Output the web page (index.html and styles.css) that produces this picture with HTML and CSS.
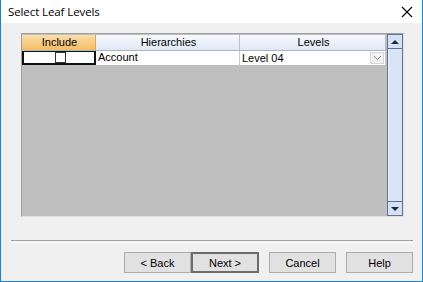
FILE: index.html
```html
<!DOCTYPE html>
<html lang="en">

<head>
    <meta charset="UTF-8">
    <title>Select Leaf Levels</title>
    <link rel="stylesheet" href="styles.css">
</head>

<body>
    <div class="window">
        <div class="titlebar">
            <p>Select Leaf Levels</p>
            <svg class="close" width="12" height="12" viewBox="0 0 12 12">
                <path d="M1 1 L11 11 M11 1 L1 11" stroke="#000" stroke-width="1.1" fill="none"/>
            </svg>
        </div>

        <div class="content">
            <div class="grid">
                <div class="grid-body">
                    <div class="grid-row header">
                        <div class="cell head active">Include</div>
                        <div class="cell head">Hierarchies</div>
                        <div class="cell head">Levels</div>
                    </div>
                    <div class="grid-row data">
                        <div class="cell check-cell"><span class="checkbox"></span></div>
                        <div class="cell">Account</div>
                        <div class="cell combo">
                            <span>Level 04</span>
                            <span class="drop">
                                <svg width="9" height="6" viewBox="0 0 9 6">
                                    <path d="M1 1 L4.5 4.5 L8 1" stroke="#8a8a8a" fill="none"/>
                                </svg>
                            </span>
                        </div>
                    </div>
                    <div class="grid-fill"></div>
                </div>
                <div class="scrollbar">
                    <div class="arrow"><span class="tri up"></span></div>
                    <div class="track"></div>
                    <div class="arrow"><span class="tri down"></span></div>
                </div>
            </div>

            <div class="separator"></div>

            <div class="buttons">
                <button>&lt; Back</button>
                <button class="default">Next &gt;</button>
                <button class="spaced">Cancel</button>
                <button class="spaced">Help</button>
            </div>
        </div>
    </div>
</body>

</html>
```

FILE: styles.css
```css
body {
    margin: 0;
    font-family: "Liberation Sans", Arial, sans-serif;
    font-size: 11px;
    color: #000;
}

.window {
    width: 423px;
    height: 282px;
    box-sizing: border-box;
    border: 1px solid #1883d7;
    border-top: none;
    background-color: #f0f0f0;
    display: flex;
    flex-direction: column;
}

.titlebar {
    height: 23px;
    background-color: #fff;
    display: flex;
    align-items: center;
    justify-content: space-between;
    padding: 0 9px 0 7px;
}

.titlebar p {
    margin: 0;
    font-family: "Open Sans", "Noto Sans", sans-serif;
    font-size: 11.5px;
    letter-spacing: -0.1px;
}

.content {
    padding: 10px 9px 0 10px;
}

.grid {
    margin: 0 9px 0 10px;
    height: 184px;
    box-sizing: border-box;
    border: 1px solid #a0a0a0;
    border-right-color: #e3e3e3;
    border-bottom-color: #e3e3e3;
    display: flex;
    gap: 1px;
    background-color: #bfbfbf;
}

.grid-body {
    flex: 1;
    display: flex;
    flex-direction: column;
}

.grid-row {
    display: grid;
    grid-template-columns: 74px 144px 1fr;
}

.header {
    height: 16px;
    margin-top: 1px;
}

.cell {
    box-sizing: border-box;
    padding-left: 2px;
    line-height: 13px;
    white-space: nowrap;
    overflow: hidden;
}

.head {
    text-align: center;
    background: linear-gradient(#f7fafe, #dfe8f5);
    border-right: 1px solid #b4c0d2;
    border-bottom: 1px solid #a9b4c4;
    line-height: 15px;
}

.head.active {
    background: linear-gradient(#fbdea9, #f4bc63);
    border-right-color: #e0a552;
}

.data {
    height: 14px;
    background-color: #fff;
}

.data .cell {
    border-right: 1px solid #c8c8c8;
    background-color: #fff;
}

.check-cell {
    border: 2px solid #111 !important;
    border-top-width: 1px !important;
    display: flex;
    justify-content: center;
    align-items: center;
}

.checkbox {
    width: 11px;
    height: 11px;
    box-sizing: border-box;
    border: 1px solid #333;
    background-color: #fff;
}

.combo {
    display: flex;
    justify-content: space-between;
    align-items: center;
    padding-right: 0;
}

.drop {
    width: 14px;
    height: 12px;
    box-sizing: border-box;
    border: 1px solid #d8d8d8;
    background-color: #f2f2f2;
    display: flex;
    justify-content: center;
    align-items: center;
    margin-right: 1px;
}

.grid-fill {
    flex: 1;
    background-color: #bfbfbf;
}

.scrollbar {
    width: 16px;
    display: flex;
    flex-direction: column;
    background-color: #d5e1f4;
    border: 1px solid #5f7391;
    box-sizing: border-box;
    border-top: none;
    border-bottom: none;
}

.arrow {
    height: 13px;
    display: flex;
    justify-content: center;
    align-items: center;
    background-color: #d5e1f4;
    border-top: 1px solid #5f7391;
    border-bottom: 1px solid #5f7391;
}

.track {
    flex: 1;
    background-color: #d9e5f7;
    border-left: 1px solid #eef3fb;
}

.tri {
    width: 0;
    height: 0;
    border-left: 4px solid transparent;
    border-right: 4px solid transparent;
}

.tri.up {
    border-bottom: 4px solid #1a2a44;
}

.tri.down {
    border-top: 4px solid #1a2a44;
}

.separator {
    height: 1px;
    margin-top: 23px;
    border-top: 1px solid #a0a0a0;
    border-bottom: 1px solid #fff;
}

.buttons {
    display: flex;
    justify-content: flex-end;
    margin-top: 9px;
}

button {
    width: 67px;
    height: 21px;
    padding: 0;
    font-family: "Liberation Sans", Arial, sans-serif;
    font-size: 11px;
    color: #000;
    background-color: #e1e1e1;
    border: 1px solid #adadad;
}

button.default {
    width: 68px;
    border: 2px solid #6d6d6d;
}

button.spaced {
    margin-left: 10px;
}
```
